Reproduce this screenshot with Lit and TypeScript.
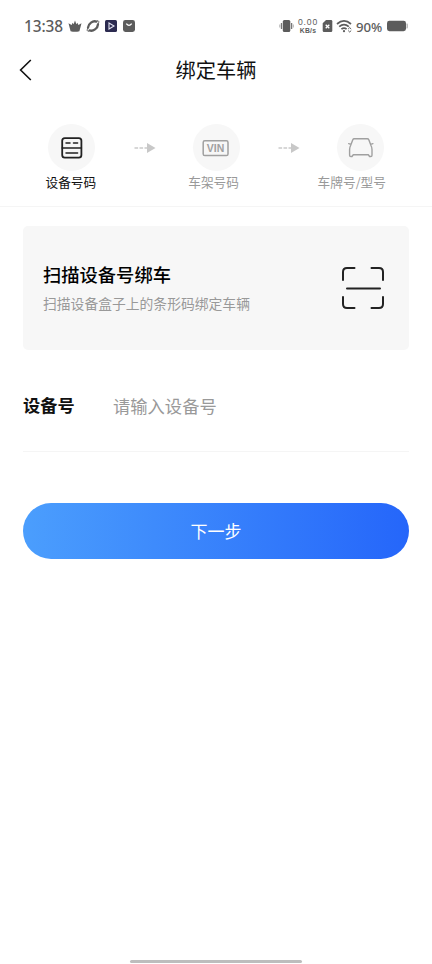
import { LitElement, html, css, svg } from "lit";
import { customElement } from "lit/decorators.js";

const arrow = html`<svg class="arrow" width="22" height="12" viewBox="0 0 22 12">
  <path d="M0.5 6H13" stroke="#cacaca" stroke-width="1.5" stroke-dasharray="3.6 1.4" />
  <path d="M13 1L21.5 6L13 11Z" fill="#c8c8c8" />
</svg>`;

const stepIcon = (body: unknown, color: string) => html`<span class="circle">
  <svg width="30" height="30" viewBox="0 0 30 30" fill="none" stroke=${color} stroke-linecap="round" stroke-linejoin="round">${body}</svg>
</span>`;

@customElement("app-root")
export class AppRoot extends LitElement {
  static styles = css`
    :host {
      display: flex;
      flex-direction: column;
      box-sizing: border-box;
      height: 964px;
      background: #fff;
      color: #111;
      font-family: "Noto Sans CJK SC", sans-serif;
      line-height: 1;
    }
    svg { display: block; flex: none; }
    .status {
      display: flex;
      align-items: center;
      height: 52px;
      padding: 0 23px 0 24px;
      box-sizing: border-box;
      color: #5c5c5c;
    }
    .clock { width: 40px; padding-top: 1px; font: 500 15.4px/20px "Noto Sans", sans-serif; letter-spacing: -0.1px; white-space: nowrap; }
    .left, .right { display: flex; align-items: center; }
    .left { gap: 4px; }
    .right { margin-left: auto; }
    .speed { width: 22px; margin: 0 3px; text-align: center; font: 500 8.6px/9px "Liberation Sans", sans-serif; white-space: nowrap; }
    .speed span { display: block; }
    .speed .rate { letter-spacing: 0.8px; }
    .speed .unit { font-size: 6.8px; font-weight: 700; line-height: 8px; letter-spacing: 0.2px; }
    .wifi { margin-left: 2px; }
    .percent { width: 27px; margin: 1px 4px 0 3px; font: 500 13.2px/16px "Noto Sans", sans-serif; white-space: nowrap; }
    .nav {
      display: grid;
      grid-template-columns: 52px 1fr 52px;
      align-items: center;
      height: 36px;
    }
    .back { padding-left: 18px; }
    h1 { margin: 0; text-align: center; font-size: 20.2px; font-weight: 400; line-height: 30px; color: #111; }
    .steps { height: 118px; border-bottom: 1px solid #f5f5f5; }
    .track {
      display: flex;
      align-items: center;
      justify-content: space-between;
      padding: 36px 48px 0;
    }
    .circle {
      display: flex;
      align-items: center;
      justify-content: center;
      width: 47px;
      height: 47px;
      border-radius: 50%;
      background: #f7f7f7;
    }
    .vin { font: 700 11px "Liberation Sans", sans-serif; }
    .arrow { margin-left: 2px; }
    .names { display: flex; padding: 2px 46px 0 45.5px; font-size: 12.7px; line-height: 18px; color: #999; white-space: nowrap; }
    .names span:nth-child(2) { margin-left: 92px; }
    .names span:nth-child(3) { margin-left: auto; }
    .names .on { color: #111; }
    .card {
      display: flex;
      align-items: center;
      justify-content: space-between;
      box-sizing: border-box;
      height: 124px;
      margin: 19px 23px 0;
      padding: 0 25px 0 20px;
      border-radius: 5px;
      background: #f7f7f7;
    }
    h2 { margin: -1px 0 0; font-size: 18.3px; font-weight: 500; line-height: 28px; color: #000; }
    .card p { margin: 4px 0 0; font-size: 13.8px; line-height: 23px; color: #999; }
    .field {
      display: flex;
      align-items: center;
      box-sizing: border-box;
      height: 102px;
      margin: 0 23px;
      padding-top: 10px;
      border-bottom: 1px solid #f5f5f5;
      font-size: 17.3px;
      line-height: 26px;
    }
    .field label { width: 90px; margin-top: -2px; font-weight: 700; font-size: 17.2px; color: #111; }
    .field span { color: #999; }
    button {
      height: 56px;
      margin: 51px 23px 0;
      padding: 0;
      border: 0;
      border-radius: 28px;
      background: linear-gradient(90deg, #4b9efd, #2566fa);
      color: #fff;
      font: 400 17px/26px "Noto Sans CJK SC", sans-serif;
    }
    .home { width: 172px; height: 3px; margin: auto auto 1px; border-radius: 2px; background: #bdbdbd; }
  `;

  private statusBar() {
    return html`<div class="status">
      <div class="left">
        <span class="clock">13:38</span>
        <svg width="14" height="14" viewBox="0 0 14 14" fill="#5c5c5c">
          <path d="M0.5 4.3L3.6 6L4.6 3.8L5.6 5.2L7 1.6L8.4 5.2L9.4 3.8L10.4 6L13.5 4.3L11.4 12.2Q7 13.2 2.6 12.2Z" />
        </svg>
        <svg width="14" height="14" viewBox="0 0 14 14" fill="none" stroke="#5c5c5c" stroke-linecap="round">
          <path d="M10.4 2.6C7 1.2 2.2 4.6 2 8.6" stroke-width="2.3" />
          <path d="M3.6 11.4C7 12.8 11.8 9.4 12 5.4" stroke-width="2.3" />
          <path d="M1.8 9.2C.7 11 .9 12.7 2.7 12.2M12.2 4.8C13.3 3 13.1 1.3 11.3 1.8" />
        </svg>
        <svg width="14" height="14" viewBox="0 0 14 14">
          <rect x="1" y="1" width="12" height="12" rx="1.5" fill="#2c2b50" />
          <path d="M5 4L10 7L5 10Z" fill="none" stroke="#e3e3f2" stroke-width="1.1" />
        </svg>
        <svg width="14" height="14" viewBox="0 0 14 14">
          <rect x="1" y="1" width="12" height="12" rx="2.4" fill="#5c5c5c" />
          <path d="M4.3 4.7Q7 8.2 9.7 4.7" fill="none" stroke="#fff" stroke-width="1.3" />
        </svg>
      </div>
      <div class="right">
        <svg width="15" height="14" viewBox="0 0 15 14" fill="#5c5c5c">
          <rect x="3.8" y="1" width="7.5" height="12" rx="1.5" />
          <path d="M2.5 4V10M12.6 4V10" stroke="#777" stroke-width="1.3" />
          <path d="M.8 5.5V8.5M14.3 5.5V8.5" stroke="#999" stroke-width=".8" />
        </svg>
        <div class="speed"><span class="rate">0.00</span><span class="unit">KB/s</span></div>
        <svg width="11" height="14" viewBox="0 0 11 14">
          <path d="M4 1H9Q10.3 1 10.3 2.3V11.5Q10.3 13 9 13H2Q.7 13 .7 11.5V4.3Z" fill="#5c5c5c" />
          <path d="M3.7 5.7L7.3 9.3M7.3 5.7L3.7 9.3" stroke="#fff" stroke-width="1.3" />
        </svg>
        <svg class="wifi" width="18" height="14" viewBox="0 0 18 14" fill="none" stroke="#5c5c5c" stroke-width="1.7">
          <path d="M2 5Q9 -1.4 16 5M4.2 7.7Q9 3.4 13.8 7.7M6.4 10.2Q9 8 11.6 10.2" />
          <circle cx="9" cy="12.2" r="1.1" fill="#5c5c5c" stroke="none" />
          <path d="M13.2 10L14.7 8.6L16.2 10M13.2 11.6L14.7 13L16.2 11.6" stroke-width="1" />
        </svg>
        <span class="percent">90%</span>
        <svg width="22" height="12" viewBox="0 0 22 12">
          <rect x="0" y=".8" width="19" height="10.4" rx="2.4" fill="#5c5c5c" />
          <path d="M20 3.7Q21.3 6 20 8.3Z" fill="#aaa" stroke="#bbb" />
        </svg>
      </div>
    </div>`;
  }

  render() {
    return html`
      ${this.statusBar()}
      <div class="nav">
        <svg class="back" width="16" height="22" viewBox="0 0 16 22" fill="none" stroke="#111" stroke-width="1.6">
          <path d="M12.8 1L2.6 11L12.8 21" />
        </svg>
        <h1>绑定车辆</h1>
      </div>
      <div class="steps">
        <div class="track">
          ${stepIcon(svg`<g stroke-width="1.8"><rect x="5.2" y="5.2" width="19.2" height="19.4" rx="2.6" /><path d="M5.2 15H24.4" stroke-width="1.5" /><path d="M9 10H13M16.5 10H20.6M9 20H20.6" stroke-width="1.5" /></g>`, "#222")}
          ${arrow}
          ${stepIcon(svg`<rect x="2.2" y="7.8" width="24.8" height="14.8" rx="1.6" stroke-width="1.5" /><text class="vin" x="14.6" y="19" text-anchor="middle" textLength="17.5" lengthAdjust="spacingAndGlyphs" fill="#a0a0a0" stroke="none">VIN</text>`, "#a0a0a0")}
          ${arrow}
          ${stepIcon(svg`<path stroke-width="1.4" d="M8.3 5.8H21.3Q22.4 5.8 22.8 6.8L25 12.5Q26 14.5 26 16.5V22.3Q26 23.5 24.8 23.5H23.6L22.3 21.8H7.3L6 23.5H4.8Q3.6 23.5 3.6 22.3V16.5Q3.6 14.5 4.6 12.5L6.8 6.8Q7.2 5.8 8.3 5.8ZM2.7 10.6L5 11.4M26.9 10.6L24.6 11.4" />`, "#a0a0a0")}
        </div>
        <div class="names"><span class="on">设备号码</span><span>车架号码</span><span>车牌号/型号</span></div>
      </div>
      <div class="card">
        <div><h2>扫描设备号绑车</h2><p>扫描设备盒子上的条形码绑定车辆</p></div>
        <svg width="42" height="42" viewBox="0 0 42 42" fill="none" stroke="#222" stroke-width="2" stroke-linecap="round">
          <path d="M1 13V5Q1 1 5 1H12.5M29.5 1H37Q41 1 41 5V13M41 30V37Q41 41 37 41H29.5M12.5 41H5Q1 41 1 37V30M5 21.5H38" />
        </svg>
      </div>
      <div class="field"><label>设备号</label><span>请输入设备号</span></div>
      <button>下一步</button>
      <div class="home"></div>
    `;
  }
}
